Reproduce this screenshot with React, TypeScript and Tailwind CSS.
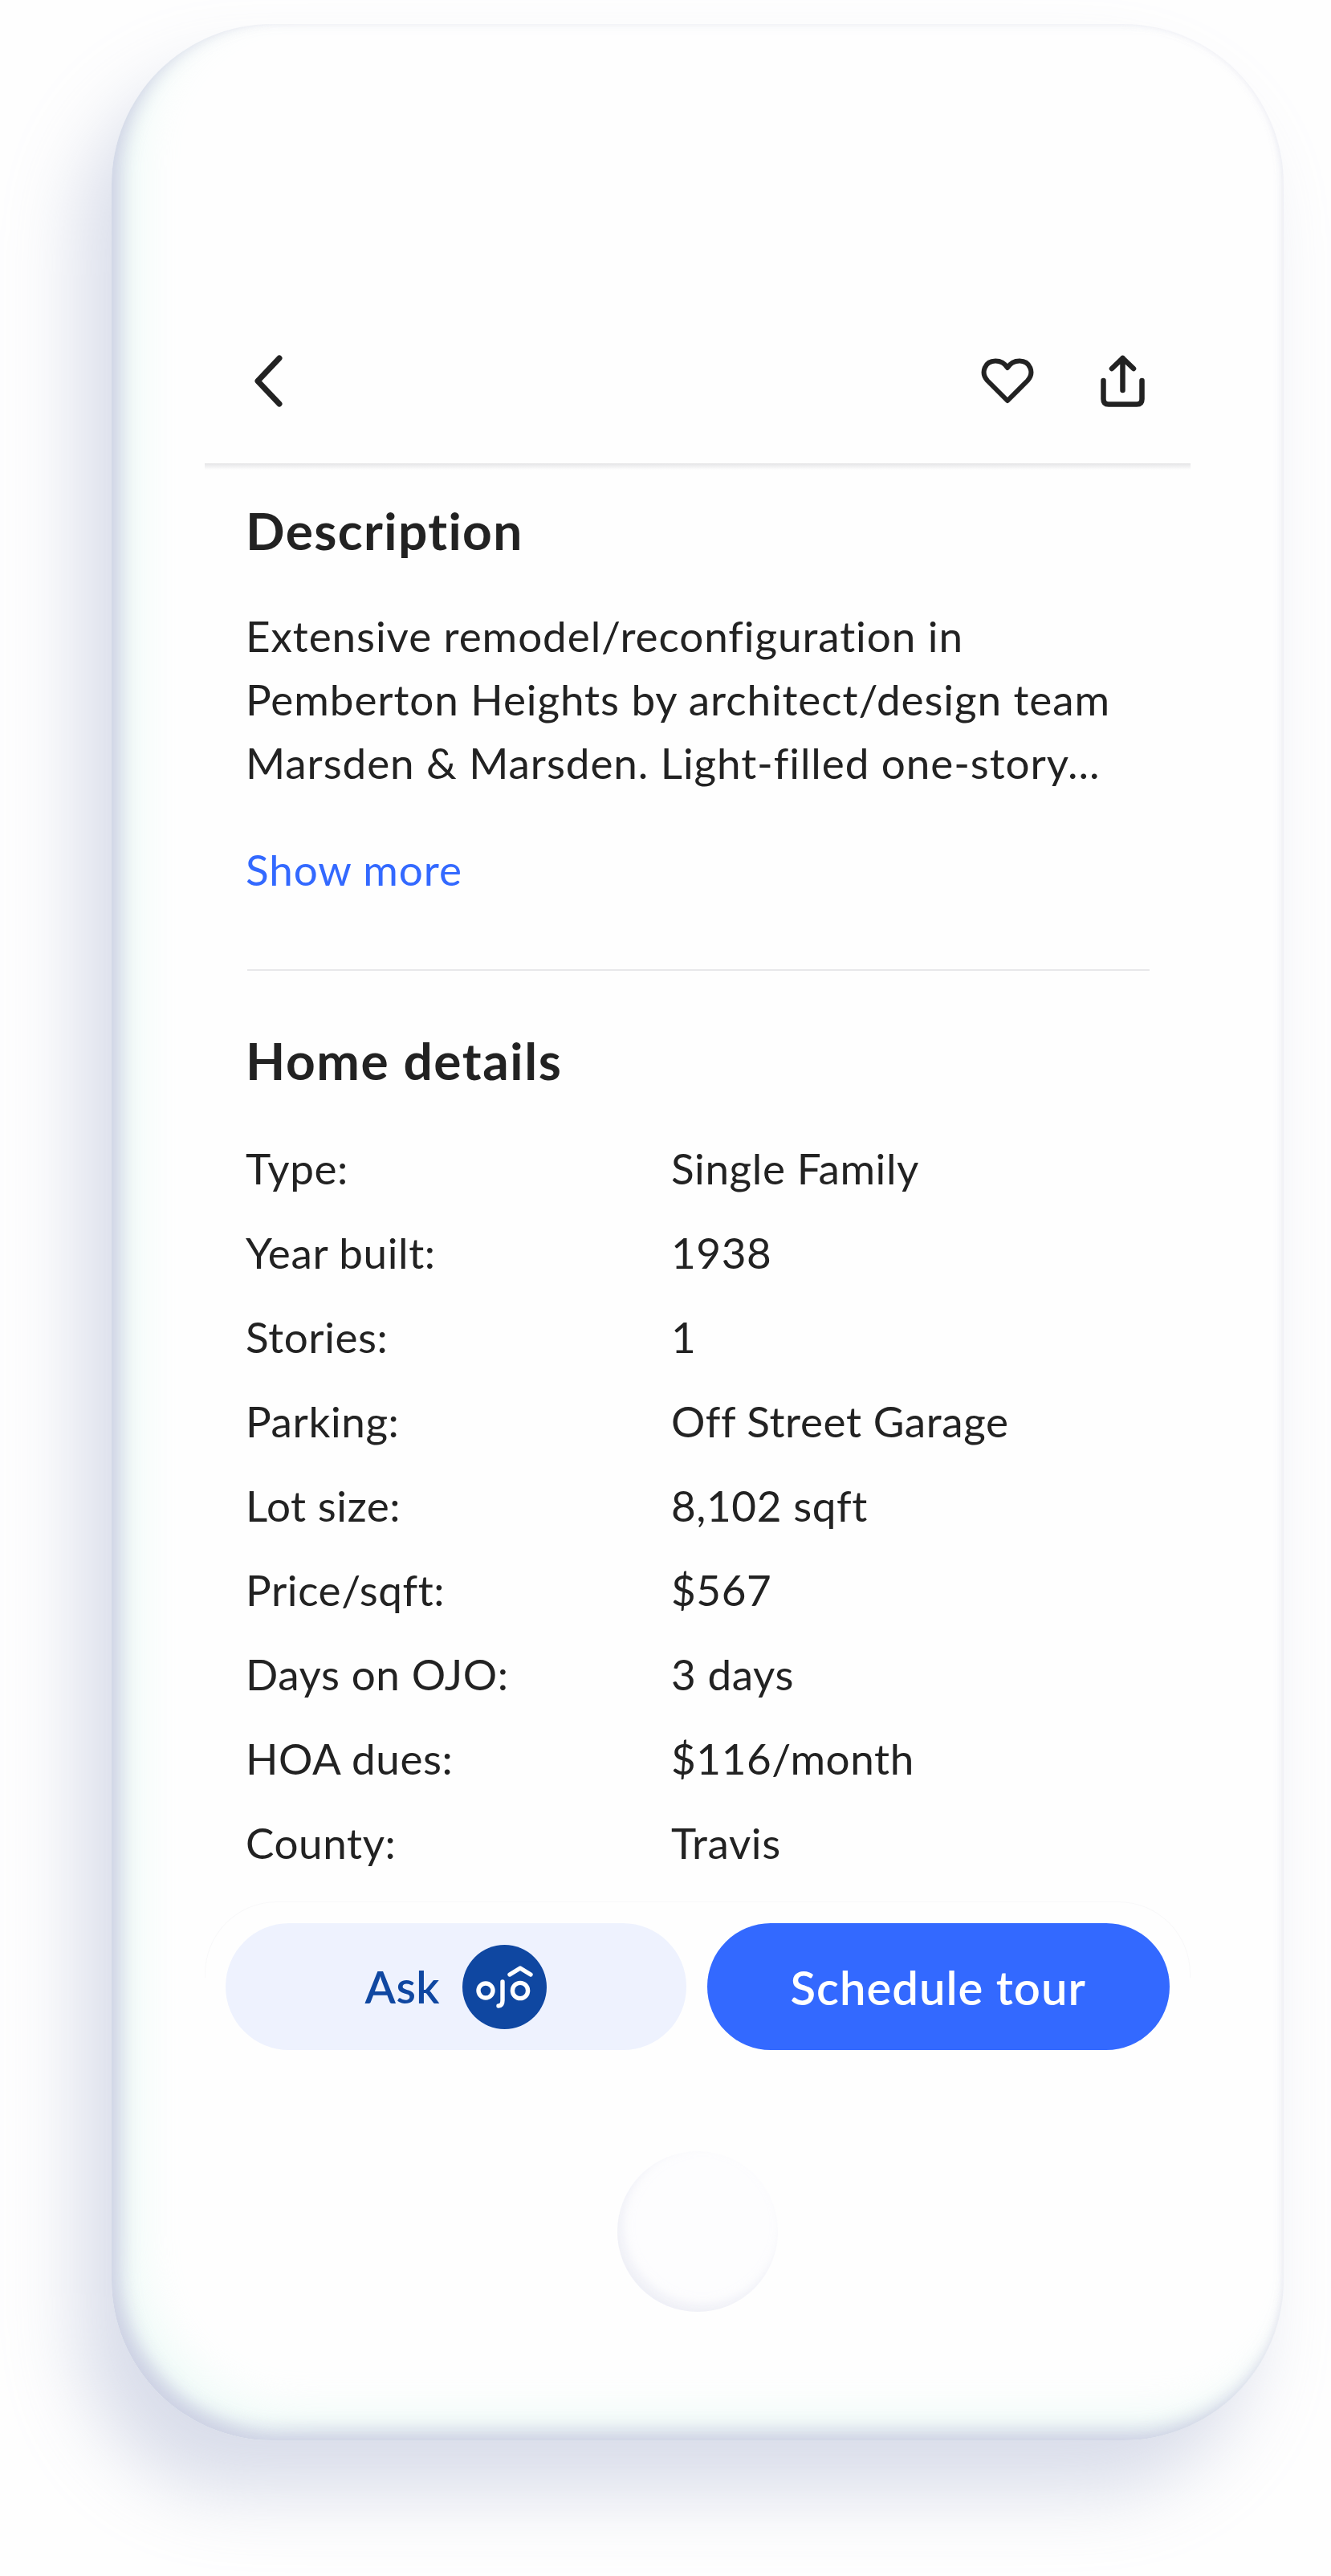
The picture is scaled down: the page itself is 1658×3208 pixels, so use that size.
const details = [
  ["Type:", "Single Family"],
  ["Year built:", "1938"],
  ["Stories:", "1"],
  ["Parking:", "Off Street Garage"],
  ["Lot size:", "8,102 sqft"],
  ["Price/sqft:", "$567"],
  ["Days on OJO:", "3 days"],
  ["HOA dues:", "$116/month"],
  ["County:", "Travis"],
];

function OjoLogo() {
  return (
    <svg viewBox="0 0 105 105" className="w-[105px] h-[105px] shrink-0">
      <circle cx="52.5" cy="52.5" r="52.5" fill="#0f47a1" />
      <g fill="none" stroke="#ffffff" strokeWidth="5.4" strokeLinecap="round" strokeLinejoin="round">
        <circle cx="29" cy="57" r="9" />
        <path d="M50 46V69Q50 76 45 76" />
        <circle cx="72" cy="57" r="9.6" />
        <path d="M59 37L72 29L85 37" />
      </g>
    </svg>
  );
}

export default function App() {
  return (
    <div className="w-[1658px] h-[3208px] bg-[#fefefe] overflow-hidden pt-[30px] pl-[139px] font-['Lato',sans-serif] text-[#222222]">
      <div className="w-[1460px] h-[3009px] rounded-[200px] bg-[#fefefe] flex flex-col items-center shadow-[inset_12px_-12px_22px_rgba(196,199,222,0.8),inset_38px_-38px_50px_rgba(232,250,245,0.6),inset_-3px_0_6px_rgba(235,236,244,0.5),-40px_65px_90px_rgba(175,183,212,0.46)]">
        <div className="w-[1228px] pt-[412px] pb-[70px] pl-[61px] pr-[57px] flex items-center">
          <svg viewBox="0 0 36 65" className="w-[36px] h-[65px]" fill="none" stroke="#222222" strokeWidth="7" strokeLinecap="round" strokeLinejoin="round">
            <path d="M32 4L5 32.5L32 61" />
          </svg>
          <svg viewBox="0 0 66 57" className="w-[66px] h-[57px] ml-auto" fill="none" stroke="#222222" strokeWidth="6" strokeLinejoin="round">
            <path d="M33 53L8 28C-1 18 5 3.500 18 3.500C25 3.500 30 7 33 12C36 7 41 3.500 48 3.500C61 3.500 67 18 58 28Z" />
          </svg>
          <svg viewBox="0 0 55 65" className="w-[55px] h-[65px] ml-[83px]" fill="none" stroke="#222222" strokeWidth="6.5" strokeLinecap="round" strokeLinejoin="round">
            <path d="M27.5 4V44M14 17L27.5 4L41 17" />
            <path d="M3.500 32V55Q3.500 61.500 10 61.500H45Q51.500 61.500 51.500 55V32" />
          </svg>
        </div>
        <div className="w-[1228px] h-[8px] bg-gradient-to-b from-[#e4e4e6] to-[#fefefe]" />

        <div className="w-[1228px] pl-[51px] pr-[51px] flex flex-col">
          <h2 className="text-[64px] leading-[80px] font-bold tracking-[1.4px] mt-[36px]">Description</h2>
          <p className="text-[53px] leading-[79px] tracking-[0.93px] mt-[51px] whitespace-pre-line">
            {"Extensive remodel/reconfiguration in\nPemberton Heights by architect/design team\nMarsden & Marsden. Light-filled one-story..."}
          </p>
          <span className="text-[53px] leading-[80px] tracking-[0.93px] text-[#3369ff] mt-[54px]">Show more</span>
          <div className="h-[2px] ml-[2px] bg-[#e8e8ea] mt-[84px]" />
          <h2 className="text-[64px] leading-[80px] font-bold tracking-[1.6px] mt-[72px]">Home details</h2>
          <div className="grid grid-cols-[530px_1fr] mt-[41px] text-[53px] tracking-[0.6px] leading-[105px]">
            {details.map(([label, value]) => (
              <div key={label} className="contents">
                <span>{label}</span>
                <span>{value}</span>
              </div>
            ))}
          </div>
        </div>

        <div className="relative w-[1228px] mt-[21px] px-[26px] pt-[27px] flex gap-[26px]">
          <div className="absolute left-0 top-0 w-full h-[95px] rounded-t-[90px] border-t border-x border-[#f8f8f9]" />
          <button className="relative w-[575px] h-[158px] rounded-full bg-[#eef2fe] text-[#0f47a1] text-[56px] tracking-[0.5px] font-semibold flex items-center justify-center gap-[28px]">
            Ask
            <OjoLogo />
          </button>
          <button className="relative w-[578px] h-[158px] rounded-full bg-[#3369ff] text-white text-[58px] tracking-[1px] font-semibold flex items-center justify-center">
            Schedule tour
          </button>
        </div>

        <div className="w-[200px] h-[200px] mt-[126px] rounded-full bg-[#fdfdfe] shadow-[inset_6px_-8px_14px_rgba(225,228,240,0.55)]" />
      </div>
    </div>
  );
}
